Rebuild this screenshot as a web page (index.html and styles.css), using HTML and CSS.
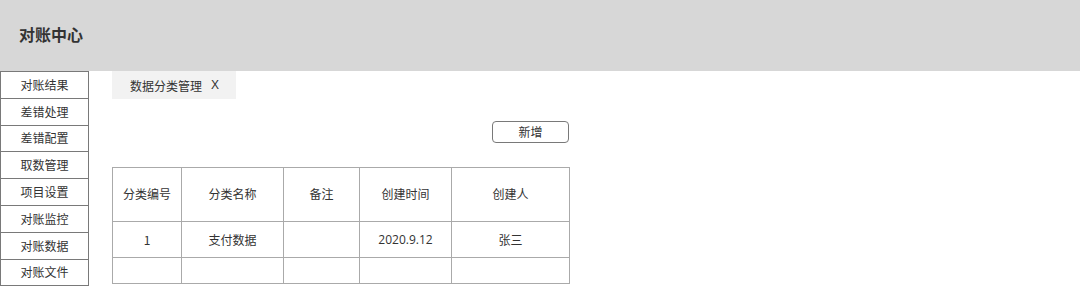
FILE: index.html
```html
<!DOCTYPE html>
<html lang="zh-CN">
<head>
<meta charset="utf-8">
<title>对账中心</title>
<link rel="stylesheet" href="styles.css">
</head>
<body>
<header class="topbar">
  <h1 class="title">对账中心</h1>
</header>
<div class="main">
  <nav class="sidebar">
    <div class="nav-item">对账结果</div>
    <div class="nav-item">差错处理</div>
    <div class="nav-item">差错配置</div>
    <div class="nav-item">取数管理</div>
    <div class="nav-item">项目设置</div>
    <div class="nav-item">对账监控</div>
    <div class="nav-item">对账数据</div>
    <div class="nav-item">对账文件</div>
  </nav>
  <section class="content">
    <div class="tab">数据分类管理<span class="tab-close">X</span></div>
    <div class="toolbar">
      <button class="btn">新增</button>
    </div>
    <table class="grid">
      <colgroup>
        <col class="c1"><col class="c2"><col class="c3"><col class="c4"><col class="c5">
      </colgroup>
      <tr class="head">
        <td>分类编号</td><td>分类名称</td><td>备注</td><td>创建时间</td><td>创建人</td>
      </tr>
      <tr class="row">
        <td>1</td><td>支付数据</td><td></td><td class="num">2020.9.12</td><td>张三</td>
      </tr>
      <tr class="empty">
        <td></td><td></td><td></td><td></td><td></td>
      </tr>
    </table>
  </section>
</div>
</body>
</html>
```
FILE: styles.css
```css
* { box-sizing: border-box; }
html, body {
  margin: 0;
  padding: 0;
  background: #ffffff;
  font-family: "Noto Sans CJK SC", "Noto Sans", "Liberation Sans", sans-serif;
  color: #333333;
  font-size: 12px;
}
.topbar {
  height: 71px;
  background: #d7d7d7;
  display: flex;
  align-items: center;
  padding: 0 0 3px 19px;
}
.title {
  margin: 0;
  font-size: 16px;
  font-weight: 700;
  color: #333333;
  letter-spacing: 0;
}
.main {
  display: flex;
  align-items: flex-start;
}
.sidebar {
  width: 89px;
  border: 1px solid #797979;
  border-bottom: none;
  display: flex;
  flex-direction: column;
}
.nav-item {
  height: 26.8px;
  border-bottom: 1px solid #797979;
  display: flex;
  align-items: center;
  justify-content: center;
  font-size: 12px;
  color: #333333;
  padding-bottom: 1px;
}
.content {
  margin-left: 23px;
  width: 457px;
  display: flex;
  flex-direction: column;
}
.tab {
  width: 124px;
  height: 28px;
  background: #f2f2f2;
  display: flex;
  align-items: center;
  padding-left: 18px;
  font-size: 12px;
  color: #333333;
}
.tab-close {
  margin-left: 9px;
  font-family: "Liberation Sans", sans-serif;
  font-size: 12px;
}
.toolbar {
  display: flex;
  justify-content: flex-end;
  margin-top: 22px;
}
.btn {
  width: 77px;
  height: 22px;
  border: 1px solid #797979;
  border-radius: 4px;
  background: #ffffff;
  font-family: inherit;
  font-size: 12px;
  color: #333333;
  padding: 0 0 1px 0;
  line-height: 1;
}
.grid {
  margin-top: 24px;
  width: 457px;
  border-collapse: collapse;
  table-layout: fixed;
}
.grid td {
  border: 1px solid #aaaaaa;
  text-align: center;
  vertical-align: middle;
  padding: 0;
  font-size: 12px;
  color: #333333;
}
.c1 { width: 69px; }
.c2 { width: 102px; }
.c3 { width: 76px; }
.c4 { width: 92px; }
.c5 { width: 118px; }
.head td { height: 54px; padding-bottom: 3px; }
.row td { height: 36px; }
.empty td { height: 26px; }
.num { font-family: "Open Sans", "Liberation Sans", sans-serif; font-size: 11.5px; }
```
